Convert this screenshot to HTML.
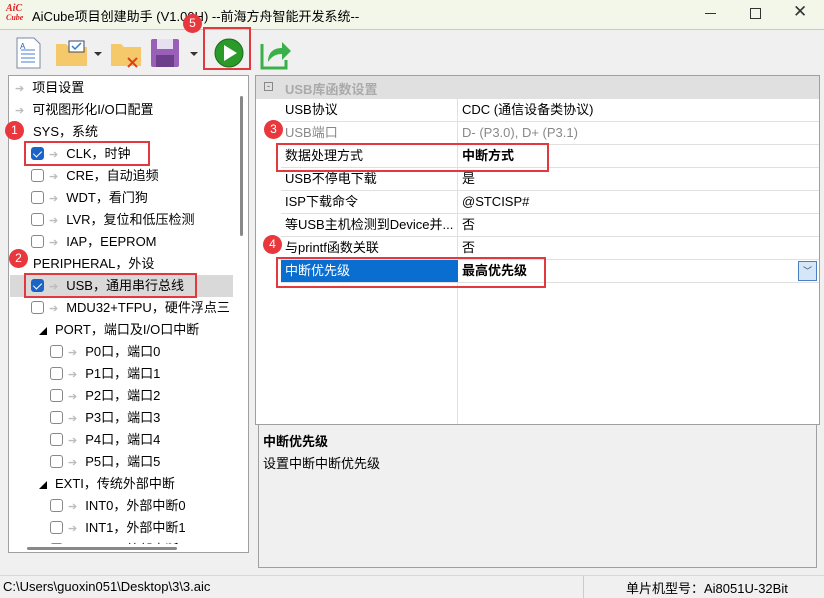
<!DOCTYPE html>
<html><head><meta charset="utf-8"><style>
*{margin:0;padding:0;box-sizing:border-box}
body{width:824px;height:598px;overflow:hidden;background:#f0f0f0;font-family:"Liberation Sans","Noto Sans CJK SC",sans-serif;font-size:13px;color:#000;position:relative}
.abs{position:absolute}
.title{left:0;top:0;width:824px;height:30px;background:#f3f7ea;border-bottom:1px solid #c8c8c8}
.tree{left:8px;top:75px;width:241px;height:478px;background:#fff;border:1px solid #a0a0a0;overflow:hidden}
.ti{position:absolute;height:22px;line-height:22px;white-space:nowrap}
.arr{color:#bbb;font-size:11px;margin-right:8px}
.cb{display:inline-block;width:13px;height:13px;border:1px solid #888;border-radius:3px;vertical-align:-2px;margin-right:5px;background:#fff}
.cb.on{background:#1a64c8;border-color:#1a64c8;position:relative}
.cb.on:after{content:"";position:absolute;left:3px;top:1px;width:4px;height:7px;border:solid #fff;border-width:0 1.5px 1.5px 0;transform:rotate(45deg)}
.red{position:absolute;border:2px solid #e0393e}
.badge{position:absolute;width:19px;height:19px;border-radius:50%;background:#e8383d;color:#fff;font-size:12px;text-align:center;line-height:19px}
.grid{left:255px;top:75px;width:565px;height:350px;background:#fff;border:1px solid #a0a0a0;overflow:hidden}
.row{position:absolute;left:25px;width:540px;height:23px;border-bottom:1px solid #e0e0e0;line-height:22px}
.row .k{position:absolute;left:4px}
.row .v{position:absolute;left:181px}
.sep{position:absolute;left:201px;top:22px;width:1px;height:330px;background:#e0e0e0}
.desc{left:258px;top:424px;width:559px;height:144px;border:1px solid #a0a0a0;background:#f0f0f0;padding:6px 4px}
</style></head><body>
<div class="abs title">
 <div class="abs" style="left:6px;top:4px;color:#d22;font:italic bold 10px 'Liberation Serif',serif;line-height:9px">AiC<br><span style="font-size:8px">Cube</span></div>
 <div class="abs" style="left:32px;top:6px;font-size:13px">AiCube项目创建助手 (V1.00H) --前海方舟智能开发系统--</div>
 <div class="abs" style="left:705px;top:13px;width:11px;height:1px;background:#333"></div>
 <div class="abs" style="left:750px;top:8px;width:11px;height:11px;border:1px solid #333"></div>
 <div class="abs" style="left:793px;top:2px;font-size:17px;color:#333">✕</div>
</div>
<svg class="abs" style="left:14px;top:36px" width="280" height="34">
 <path d="M3 2h17l6 6v24H3z" fill="#fff" stroke="#7a8aa0"/><path d="M7 14h14M7 18h14M7 22h14M7 26h14" stroke="#4a7fd0"/><text x="6" y="13" font-size="8" fill="#2a5fb0" font-family="Liberation Sans">A</text>
 <path d="M42 8h10l3 3h18v19H42z" fill="#f5c96a"/><rect x="55" y="5" width="15" height="11" fill="#fff" stroke="#446"/><path d="M58 10l3 3 6-6" stroke="#2a7fd0" fill="none" stroke-width="1.5"/>
 <path d="M80 16l4 4 4-4z" fill="#333"/>
 <path d="M97 8h10l3 3h17v19H97z" fill="#f5c96a"/><path d="M114 22l9 9M123 22l-9 9" stroke="#e04020" stroke-width="2"/>
 <rect x="137" y="3" width="28" height="28" rx="2" fill="#9a5fb8"/><rect x="143" y="3" width="16" height="10" fill="#e8e0f0"/><rect x="142" y="19" width="18" height="12" fill="#6b3f8a"/>
 <path d="M176 16l4 4 4-4z" fill="#333"/>
 <circle cx="215" cy="17" r="14" fill="#2a9a2a" stroke="#1a6a1a"/><path d="M210 9v16l13-8z" fill="#fff"/>
 <path d="M248 8v24h24v-8" fill="none" stroke="#3ab04a" stroke-width="3"/><path d="M254 26c0-10 6-14 14-14v-6l9 9-9 9v-6c-6 0-10 2-14 8z" fill="#3ab04a"/>
</svg>
<div class="red" style="left:203px;top:27px;width:48px;height:43px"></div>
<div class="badge" style="left:183px;top:14px">5</div>

<div class="abs tree">
 <div class="ti" style="left:6px;top:1px"><span class="arr">➔</span>项目设置</div>
 <div class="ti" style="left:6px;top:23px"><span class="arr">➔</span>可视图形化I/O口配置</div>
 <div class="ti" style="left:24px;top:45px">SYS，系统</div>
 <div class="ti" style="left:22px;top:67px"><span class="cb on"></span><span class="arr">➔</span>CLK，时钟</div>
 <div class="ti" style="left:22px;top:89px"><span class="cb"></span><span class="arr">➔</span>CRE，自动追频</div>
 <div class="ti" style="left:22px;top:111px"><span class="cb"></span><span class="arr">➔</span>WDT，看门狗</div>
 <div class="ti" style="left:22px;top:133px"><span class="cb"></span><span class="arr">➔</span>LVR，复位和低压检测</div>
 <div class="ti" style="left:22px;top:155px"><span class="cb"></span><span class="arr">➔</span>IAP，EEPROM</div>
 <div class="ti" style="left:24px;top:177px">PERIPHERAL，外设</div>
 <div class="abs" style="left:1px;top:199px;width:223px;height:22px;background:#d9d9d9"></div>
 <div class="ti" style="left:22px;top:199px"><span class="cb on"></span><span class="arr">➔</span>USB，通用串行总线</div>
 <div class="ti" style="left:22px;top:221px"><span class="cb"></span><span class="arr">➔</span>MDU32+TFPU，硬件浮点三</div>
 <div class="ti" style="left:30px;top:243px"><span style="font-size:8px;margin-right:8px">◢</span>PORT，端口及I/O口中断</div>
 <div class="ti" style="left:41px;top:265px"><span class="cb"></span><span class="arr">➔</span>P0口，端口0</div>
 <div class="ti" style="left:41px;top:287px"><span class="cb"></span><span class="arr">➔</span>P1口，端口1</div>
 <div class="ti" style="left:41px;top:309px"><span class="cb"></span><span class="arr">➔</span>P2口，端口2</div>
 <div class="ti" style="left:41px;top:331px"><span class="cb"></span><span class="arr">➔</span>P3口，端口3</div>
 <div class="ti" style="left:41px;top:353px"><span class="cb"></span><span class="arr">➔</span>P4口，端口4</div>
 <div class="ti" style="left:41px;top:375px"><span class="cb"></span><span class="arr">➔</span>P5口，端口5</div>
 <div class="ti" style="left:30px;top:397px"><span style="font-size:8px;margin-right:8px">◢</span>EXTI，传统外部中断</div>
 <div class="ti" style="left:41px;top:419px"><span class="cb"></span><span class="arr">➔</span>INT0，外部中断0</div>
 <div class="ti" style="left:41px;top:441px"><span class="cb"></span><span class="arr">➔</span>INT1，外部中断1</div>
 <div class="ti" style="left:41px;top:463px"><span class="cb"></span><span class="arr">➔</span>INT2，外部中断2</div>
 <div class="abs" style="left:226px;top:0;width:14px;height:476px;background:#fff"></div>
 <div class="abs" style="left:231px;top:20px;width:3px;height:140px;background:#888;border-radius:2px"></div>
 <div class="abs" style="left:0;top:468px;width:240px;height:10px;background:#fff"></div>
 <div class="abs" style="left:18px;top:471px;width:150px;height:3px;background:#888;border-radius:2px"></div>
</div>
<div class="red" style="left:24px;top:141px;width:126px;height:25px"></div>
<div class="badge" style="left:5px;top:121px">1</div>
<div class="red" style="left:24px;top:273px;width:173px;height:25px"></div>
<div class="badge" style="left:9px;top:249px">2</div>

<div class="abs grid">
 <div class="abs" style="left:0;top:0;width:565px;height:23px;background:#e0e0e0"></div>
 <div class="abs" style="left:8px;top:6px;width:9px;height:9px;border:1px solid #888;font-size:9px;line-height:6px;text-align:center;color:#555">-</div>
 <div class="abs" style="left:29px;top:3px;color:#aaa;font-weight:bold">USB库函数设置</div>
 <div class="sep"></div>
 <div class="row" style="top:23px"><span class="k">USB协议</span><span class="v">CDC (通信设备类协议)</span></div>
 <div class="row" style="top:46px;color:#888"><span class="k">USB端口</span><span class="v">D- (P3.0), D+ (P3.1)</span></div>
 <div class="row" style="top:69px"><span class="k">数据处理方式</span><span class="v" style="font-weight:bold">中断方式</span></div>
 <div class="row" style="top:92px"><span class="k">USB不停电下载</span><span class="v">是</span></div>
 <div class="row" style="top:115px"><span class="k">ISP下载命令</span><span class="v">@STCISP#</span></div>
 <div class="row" style="top:138px"><span class="k">等USB主机检测到Device并...</span><span class="v">否</span></div>
 <div class="row" style="top:161px"><span class="k">与printf函数关联</span><span class="v">否</span></div>
 <div class="row" style="top:184px"><div class="abs" style="left:0;top:0;width:177px;height:22px;background:#0a6ed1"></div><span class="k" style="color:#fff">中断优先级</span><span class="v" style="font-weight:bold">最高优先级</span>
  <div class="abs" style="left:517px;top:1px;width:19px;height:20px;border:1px solid #4a7fc0;background:#d4e6f8;color:#346;font-size:9px;text-align:center;line-height:18px">﹀</div></div>
</div>
<div class="red" style="left:276px;top:143px;width:273px;height:29px"></div>
<div class="badge" style="left:264px;top:120px">3</div>
<div class="red" style="left:276px;top:257px;width:270px;height:31px"></div>
<div class="badge" style="left:263px;top:235px">4</div>

<div class="abs desc"><div style="font-weight:bold">中断优先级</div><div style="margin-top:3px">设置中断中断优先级</div></div>
<div class="abs" style="left:0;top:575px;width:824px;height:1px;background:#d8d8d8"></div>
<div class="abs" style="left:3px;top:579px">C:\Users\guoxin051\Desktop\3\3.aic</div>
<div class="abs" style="left:583px;top:576px;width:1px;height:22px;background:#ccc"></div>
<div class="abs" style="left:626px;top:578px">单片机型号：Ai8051U-32Bit</div>
</body></html>
